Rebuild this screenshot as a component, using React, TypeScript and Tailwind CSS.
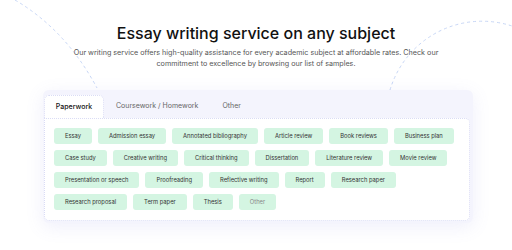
const rows: string[][] = [
  ["Essay", "Admission essay", "Annotated bibliography", "Article review", "Book reviews", "Business plan"],
  ["Case study", "Creative writing", "Critical thinking", "Dissertation", "Literature review", "Movie review"],
  ["Presentation or speech", "Proofreading", "Reflective writing", "Report", "Research paper"],
  ["Research proposal", "Term paper", "Thesis", "Other"],
];

function Chip({ label }: { label: string }) {
  const muted = label === "Other";
  return (
    <span
      className={`flex h-[16px] shrink-0 items-center whitespace-nowrap rounded-[3px] bg-[#d4f5e2] px-[11px] text-[5.8px] leading-none ${
        muted ? "text-[#888]" : "text-[#333]"
      }`}
    >
      {label}
    </span>
  );
}

export default function App() {
  return (
    <div className="relative h-[250px] w-full overflow-hidden bg-white font-['Inter',sans-serif]">
      {/* decorative dashed arcs */}
      <svg className="absolute inset-0" width="512" height="250" fill="none">
        <path d="M15 0 Q66 30 97 88" stroke="#c8d7f6" strokeWidth="1" strokeDasharray="3 3" />
        <path d="M390 90 A96 96 0 0 1 512 26" stroke="#c8d7f6" strokeWidth="1" strokeDasharray="3 3" />
      </svg>

      <div className="relative flex flex-col items-center pt-[23px]">
        <h1 className="text-[16px] font-medium leading-[20px] text-[#111]">Essay writing service on any subject</h1>
        <p className="mt-[4px] w-[370px] text-center text-[7.2px] leading-[11px] text-[#555]">
          Our writing service offers high-quality assistance for every academic subject at affordable rates. Check our
          commitment to excellence by browsing our list of samples.
        </p>

        <div className="ml-[4px] mt-[21px] w-[430px] rounded-[6px] bg-[#f4f4fd] pb-[2px] pl-px pr-[3px] pt-[5px] shadow-[0_4px_18px_rgba(120,120,220,0.12)]">
          <div className="flex h-[23px] items-stretch text-[7px]">
            <div className="flex w-[60px] items-center justify-center rounded-t-[5px] border border-b-0 border-dotted border-[#dadcf5] bg-white font-medium text-[#111]">
              Paperwork
            </div>
            <div className="flex items-center px-[12px] text-[#666]">Coursework / Homework</div>
            <div className="flex items-center px-[12px] text-[#666]">Other</div>
          </div>
          <div className="flex flex-col gap-[6px] rounded-b-[5px] rounded-tr-[5px] border border-dotted border-[#dadcf5] bg-white px-[9px] pb-[10px] pt-[9px]">
            {rows.map((row, i) => (
              <div key={i} className="flex gap-[6px]">
                {row.map((label) => (
                  <Chip key={label} label={label} />
                ))}
              </div>
            ))}
          </div>
        </div>
      </div>
    </div>
  );
}
